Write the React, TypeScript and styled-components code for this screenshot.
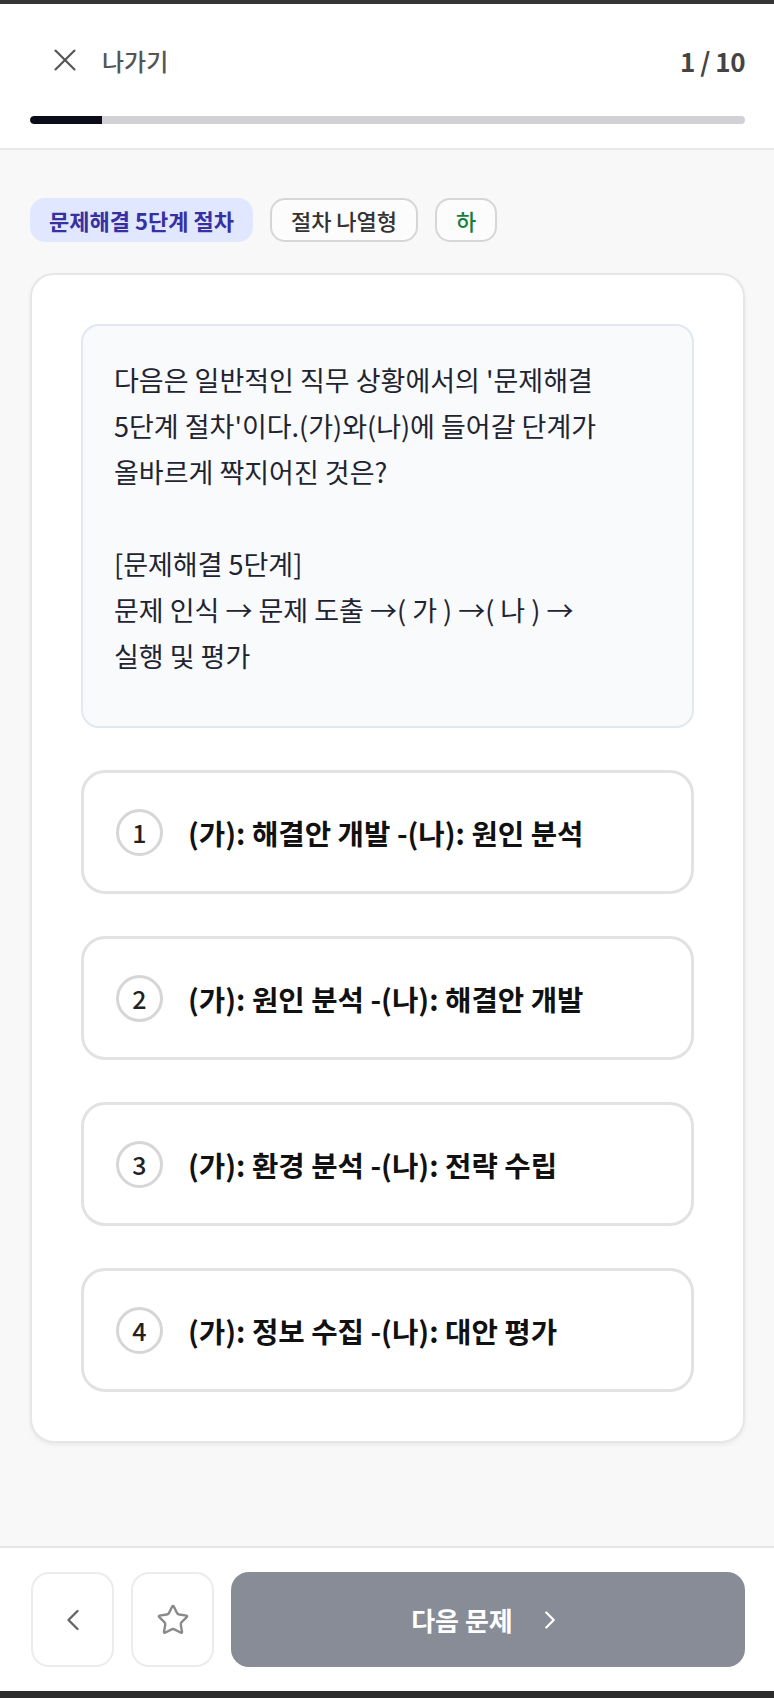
import React from "react";
import styled, { createGlobalStyle } from "styled-components";
import { X, ChevronLeft, ChevronRight, Star } from "lucide-react";

const GlobalStyle = createGlobalStyle`
  body {
    margin: 0;
    font-family: "Noto Sans CJK KR", "Noto Sans", "Liberation Sans", sans-serif;
    background: #f8f8f8;
    color: #1a1a1a;
  }
  * { box-sizing: border-box; }
`;

const Page = styled.div`
  display: flex;
  flex-direction: column;
  width: 774px;
  min-height: 1698px;
  border-top: 4px solid #363636;
  border-bottom: 7px solid #2c2c2c;
`;

const Header = styled.header`
  background: #fff;
  padding: 40px 29px 24px 30px;
  border-bottom: 2px solid #e8e8e8;
`;

const TitleRow = styled.div`
  display: flex;
  align-items: center;
  justify-content: space-between;
  height: 32px;
`;

const ExitButton = styled.button`
  display: flex;
  align-items: center;
  gap: 18px;
  border: none;
  background: none;
  padding: 0 0 0 16px;
  font-family: inherit;
  font-size: 24px;
  font-weight: 500;
  color: #555;
  cursor: pointer;
`;

const Counter = styled.span`
  font-size: 26px;
  font-weight: 700;
  color: #444;
  letter-spacing: -0.5px;
`;

const Track = styled.div`
  margin-top: 40px;
  height: 8px;
  border-radius: 4px;
  background: #d1d1d6;
  overflow: hidden;
`;

const Fill = styled.div`
  height: 100%;
  background: #0c0b1a;
  border-radius: 4px 0 0 4px;
`;

const Main = styled.main`
  flex: 1;
  background: #f8f8f8;
  padding: 48px 29px 40px 30px;
`;

const Tags = styled.div`
  display: flex;
  gap: 17px;
`;

const Tag = styled.span<{ $variant: "topic" | "type" | "level" }>`
  display: inline-flex;
  align-items: center;
  height: 44px;
  padding: 0 19px;
  border-radius: 15px;
  font-size: 22px;
  font-weight: ${(p) => (p.$variant === "topic" ? 600 : 500)};
  background: ${(p) => (p.$variant === "topic" ? "#e0e7ff" : "#fcfcfc")};
  color: ${(p) =>
    p.$variant === "topic" ? "#3730a3" : p.$variant === "level" ? "#15803d" : "#333"};
  border: ${(p) => (p.$variant === "topic" ? "none" : "2px solid #d6d6d6")};
`;

const Card = styled.section`
  margin-top: 31px;
  background: #fff;
  border: 2px solid #e6e6e6;
  border-radius: 24px;
  box-shadow: 0 2px 4px rgba(0, 0, 0, 0.06);
  padding: 49px;
  display: flex;
  flex-direction: column;
  gap: 42px;
`;

const QuestionBox = styled.div`
  background: #f8fafc;
  border: 2px solid #e2e8f0;
  border-radius: 18px;
  padding: 31px 31px 47px 31px;
  font-size: 27px;
  line-height: 46px;
  color: #1f2430;
`;

const Line = styled.div`
  white-space: pre;
  min-height: 46px;
`;

const Option = styled.button`
  display: flex;
  align-items: center;
  gap: 25px;
  height: 124px;
  padding: 0 32px;
  background: #fff;
  border: 3px solid #e2e2e2;
  border-radius: 24px;
  font-family: inherit;
  text-align: left;
  cursor: pointer;
`;

const Num = styled.span`
  flex: none;
  display: flex;
  align-items: center;
  justify-content: center;
  width: 47px;
  height: 47px;
  border-radius: 50%;
  border: 3px solid #d6d6d6;
  font-size: 25px;
  font-weight: 500;
  color: #222;
`;

const OptionText = styled.span`
  font-size: 28.7px;
  font-weight: 700;
  color: #111;
`;

const Footer = styled.footer`
  display: flex;
  gap: 17px;
  background: #fff;
  border-top: 2px solid #e6e6e6;
  padding: 24px 29px 24px 31px;
`;

const IconButton = styled.button`
  flex: none;
  display: flex;
  align-items: center;
  justify-content: center;
  width: 83px;
  height: 95px;
  background: #fff;
  border: 2px solid #ececec;
  border-radius: 18px;
  cursor: pointer;
`;

const NextButton = styled.button`
  flex: 1;
  display: flex;
  align-items: center;
  justify-content: center;
  gap: 22px;
  height: 95px;
  background: #878c96;
  border: none;
  border-radius: 18px;
  font-family: inherit;
  font-size: 26px;
  font-weight: 700;
  color: #fff;
  cursor: pointer;
`;

const questionLines = [
  "다음은 일반적인 직무 상황에서의 '문제해결",
  "5단계 절차'이다.(가)와(나)에 들어갈 단계가",
  "올바르게 짝지어진 것은?",
  "",
  "[문제해결 5단계]",
  "문제 인식 → 문제 도출 →( 가 ) →( 나 ) →",
  "실행 및 평가",
];

const options = [
  "(가): 해결안 개발 -(나): 원인 분석",
  "(가): 원인 분석 -(나): 해결안 개발",
  "(가): 환경 분석 -(나): 전략 수립",
  "(가): 정보 수집 -(나): 대안 평가",
];

export default function App() {
  const current = 1;
  const total = 10;

  return (
    <>
      <GlobalStyle />
      <Page>
        <Header>
          <TitleRow>
            <ExitButton>
              <X size={38} strokeWidth={1.3} color="#555" />
              나가기
            </ExitButton>
            <Counter>
              {current} / {total}
            </Counter>
          </TitleRow>
          <Track>
            <Fill style={{ width: `${(current / total) * 100}%` }} />
          </Track>
        </Header>

        <Main>
          <Tags>
            <Tag $variant="topic">문제해결 5단계 절차</Tag>
            <Tag $variant="type">절차 나열형</Tag>
            <Tag $variant="level">하</Tag>
          </Tags>

          <Card>
            <QuestionBox>
              {questionLines.map((l, i) => (
                <Line key={i}>{l}</Line>
              ))}
            </QuestionBox>
            {options.map((o, i) => (
              <Option key={i}>
                <Num>{i + 1}</Num>
                <OptionText>{o}</OptionText>
              </Option>
            ))}
          </Card>
        </Main>

        <Footer>
          <IconButton>
            <ChevronLeft size={36} strokeWidth={1.6} color="#666" />
          </IconButton>
          <IconButton>
            <Star size={34} strokeWidth={1.7} color="#8a8a8a" />
          </IconButton>
          <NextButton>
            다음 문제
            <ChevronRight size={30} strokeWidth={1.8} color="#fff" />
          </NextButton>
        </Footer>
      </Page>
    </>
  );
}
